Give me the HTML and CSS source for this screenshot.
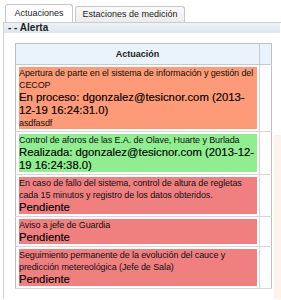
FILE: index.html
```html
<!DOCTYPE html>
<html>
<head>
<meta charset="utf-8">
<link rel="stylesheet" href="styles.css">
</head>
<body>
<div class="tabs">
  <div class="tab tab-active">Actuaciones</div>
  <div class="tab tab-idle">Estaciones de medición</div>
</div>
<div class="panel">
  <div class="alerta">- - Alerta</div>
  <div class="content">
    <table class="grid">
      <thead>
        <tr><th class="col-main">Actuación</th><th class="col-side"></th></tr>
      </thead>
      <tbody>
        <tr>
          <td class="col-main"><div class="box orange">
            <div class="small">Apertura de parte en el sistema de información y gestión del CECOP</div>
            <div class="big">En proceso: dgonzalez@tesicnor.com (2013-12-19 16:24:31.0)</div>
            <div class="small">asdfasdf</div>
          </div></td>
          <td class="col-side"></td>
        </tr>
        <tr>
          <td class="col-main"><div class="box green">
            <div class="small">Control de aforos de las E.A. de Olave, Huarte y Burlada</div>
            <div class="big">Realizada: dgonzalez@tesicnor.com (2013-12-19 16:24:38.0)</div>
          </div></td>
          <td class="col-side"></td>
        </tr>
        <tr>
          <td class="col-main"><div class="box red">
            <div class="small">En caso de fallo del sistema, control de altura de regletas cada 15 minutos y registro de los datos obteridos.</div>
            <div class="big">Pendiente</div>
          </div></td>
          <td class="col-side"></td>
        </tr>
        <tr>
          <td class="col-main"><div class="box red">
            <div class="small">Aviso a jefe de Guardia</div>
            <div class="big">Pendiente</div>
          </div></td>
          <td class="col-side"></td>
        </tr>
        <tr>
          <td class="col-main"><div class="box red">
            <div class="small">Seguimiento permanente de la evolución del cauce y predicción metereológica (Jefe de Sala)</div>
            <div class="big">Pendiente</div>
          </div></td>
          <td class="col-side"></td>
        </tr>
      </tbody>
    </table>
    <div class="side-strip"></div>
  </div>
</div>
</body>
</html>
```
FILE: styles.css
```css
html, body {
  margin: 0;
  padding: 0;
  background: #ffffff;
  font-family: "Liberation Sans", Arial, sans-serif;
  color: #222;
  width: 281px;
  height: 300px;
  overflow: hidden;
}
.tabs {
  display: flex;
  align-items: flex-end;
  gap: 2px;
  padding: 4px 0 0 5px;
  height: 18px;
  box-sizing: content-box;
  position: relative;
  z-index: 1;
}
.tab {
  box-sizing: border-box;
  font-size: 9px;
  text-align: center;
  border: 1px solid #c8c8c8;
  border-bottom: none;
  border-radius: 3px 3px 0 0;
  color: #222;
}
.tab-active {
  width: 68px;
  height: 18px;
  line-height: 17px;
  background: #fff;
}
.tab-idle {
  width: 110px;
  height: 16px;
  line-height: 15px;
  background: linear-gradient(#fafafa, #ececec);
}
.panel {
  margin-left: 3px;
  border-left: 1px solid #d0d0d0;
  border-top: 1px solid #c9cdd3;
  height: 277px;
  box-sizing: border-box;
  overflow: hidden;
}
.alerta {
  width: 272px;
  height: 10px;
  line-height: 10px;
  font-size: 10px;
  font-weight: bold;
  padding-left: 4px;
  box-sizing: content-box;
  background: linear-gradient(#eef2f7, #dfe5ed);
  color: #222;
}
.content {
  display: flex;
  align-items: flex-start;
  gap: 2px;
  padding: 10px 0 0 11px;
}
.grid {
  border-collapse: collapse;
  width: 257px;
  border: 1px solid #bfbfbf;
  table-layout: fixed;
}
.grid th {
  height: 20px;
  background: #eaf3fc;
  font-size: 9px;
  font-weight: bold;
  text-align: center;
  padding: 0;
  border-bottom: 1px solid #c8c8c8;
  color: #222;
}
.grid th.col-side {
  border-left: 1px solid #c8c8c8;
}
.col-main {
  width: 243px;
}
.col-side {
  width: 11px;
}
.grid td {
  padding: 2px 2px 2px 3px;
  border-bottom: 1px solid #d6d6d6;
  vertical-align: top;
}
.grid td.col-side {
  border-left: 1px solid #d6d6d6;
  padding: 0;
}
.box {
  color: #111;
}
.orange { background: #fd9a77; }
.green { background: #90ee90; }
.red { background: #f08080; }
.small {
  font-size: 9px;
  line-height: 12px;
  letter-spacing: -0.1px;
}
.big {
  font-size: 11.3px;
  line-height: 13px;
  color: #000;
  -webkit-text-stroke: 0.15px #000;
}
.side-strip {
  flex: 1;
  margin-top: 92px;
  height: 200px;
  background: #fdf3ea;
}
```
